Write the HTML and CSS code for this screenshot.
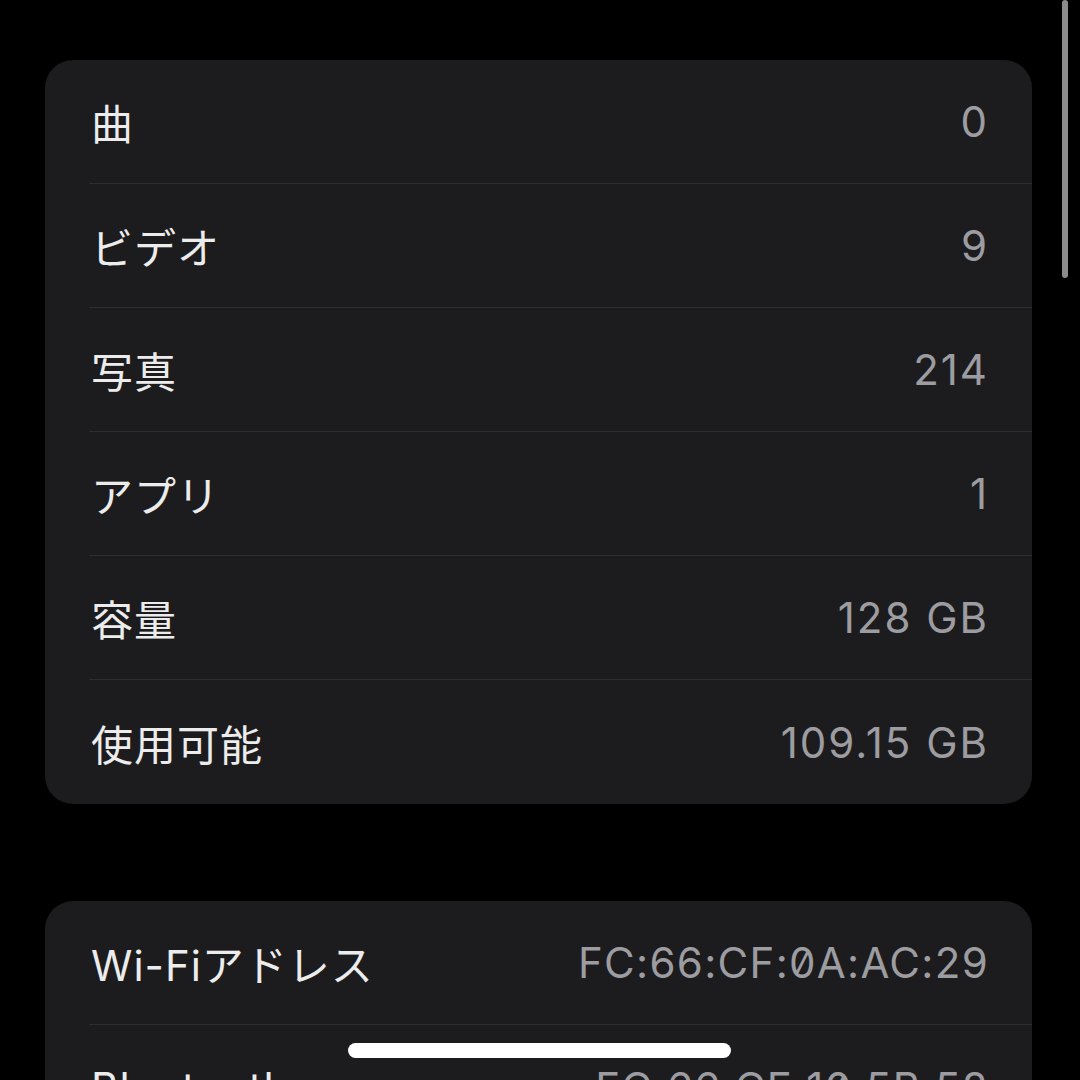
FILE: index.html
```html
<!DOCTYPE html>
<html lang="ja">
<head>
    <meta charset="UTF-8">
    <meta name="viewport" content="width=device-width, initial-scale=1.0">
    <title>情報</title>
    <link rel="stylesheet" href="styles.css">
</head>
<body>
    <div class="screen">
        <div class="group">
            <div class="row"><span class="label">曲</span><span class="value">0</span></div>
            <div class="row"><span class="label">ビデオ</span><span class="value">9</span></div>
            <div class="row"><span class="label">写真</span><span class="value">214</span></div>
            <div class="row"><span class="label">アプリ</span><span class="value">1</span></div>
            <div class="row"><span class="label">容量</span><span class="value">128 GB</span></div>
            <div class="row"><span class="label">使用可能</span><span class="value">109.15 GB</span></div>
        </div>

        <div class="group">
            <div class="row"><span class="label">Wi-Fiアドレス</span><span class="value mac">FC:66:CF:0A:AC:29</span></div>
            <div class="row"><span class="label">Bluetooth</span><span class="value mac">FC:66:CF:10:5B:58</span></div>
        </div>

        <div class="scrollbar"></div>
        <div class="home-bar"></div>
    </div>
</body>
</html>
```

FILE: styles.css
```css
html, body {
    margin: 0;
    background: #000;
}
body {
    font-family: Inter, "Noto Sans CJK JP", sans-serif;
    color: #ececec;
}
.screen {
    position: relative;
    height: 1080px;
    overflow: hidden;
    padding: 60px 48px 0 45px;
    box-sizing: border-box;
    display: flex;
    flex-direction: column;
    gap: 97px;
}
.group {
    background: #1c1c1e;
    border-radius: 28px;
    flex-shrink: 0;
}
.row {
    height: 124px;
    margin-left: 44px;
    padding: 0 45px 0 2px;
    display: flex;
    align-items: center;
    justify-content: space-between;
    border-bottom: 1px solid #2e2e30;
    box-sizing: border-box;
}
.group .row:last-child {
    border-bottom: none;
}
.label {
    font-size: 42px;
    letter-spacing: 1px;
}
.value {
    font-size: 42px;
    letter-spacing: 2px;
    margin-right: -2px;
    color: #9c9ca1;
}
.mac {
    letter-spacing: 1.3px;
    font-feature-settings: "zero" 1;
}
.scrollbar {
    position: absolute;
    top: 0;
    left: 1062px;
    width: 6px;
    height: 278px;
    border-radius: 3px;
    background: #8c8c8c;
}
.home-bar {
    position: absolute;
    left: 348px;
    top: 1043px;
    width: 383px;
    height: 15px;
    border-radius: 8px;
    background: #fff;
}
```
